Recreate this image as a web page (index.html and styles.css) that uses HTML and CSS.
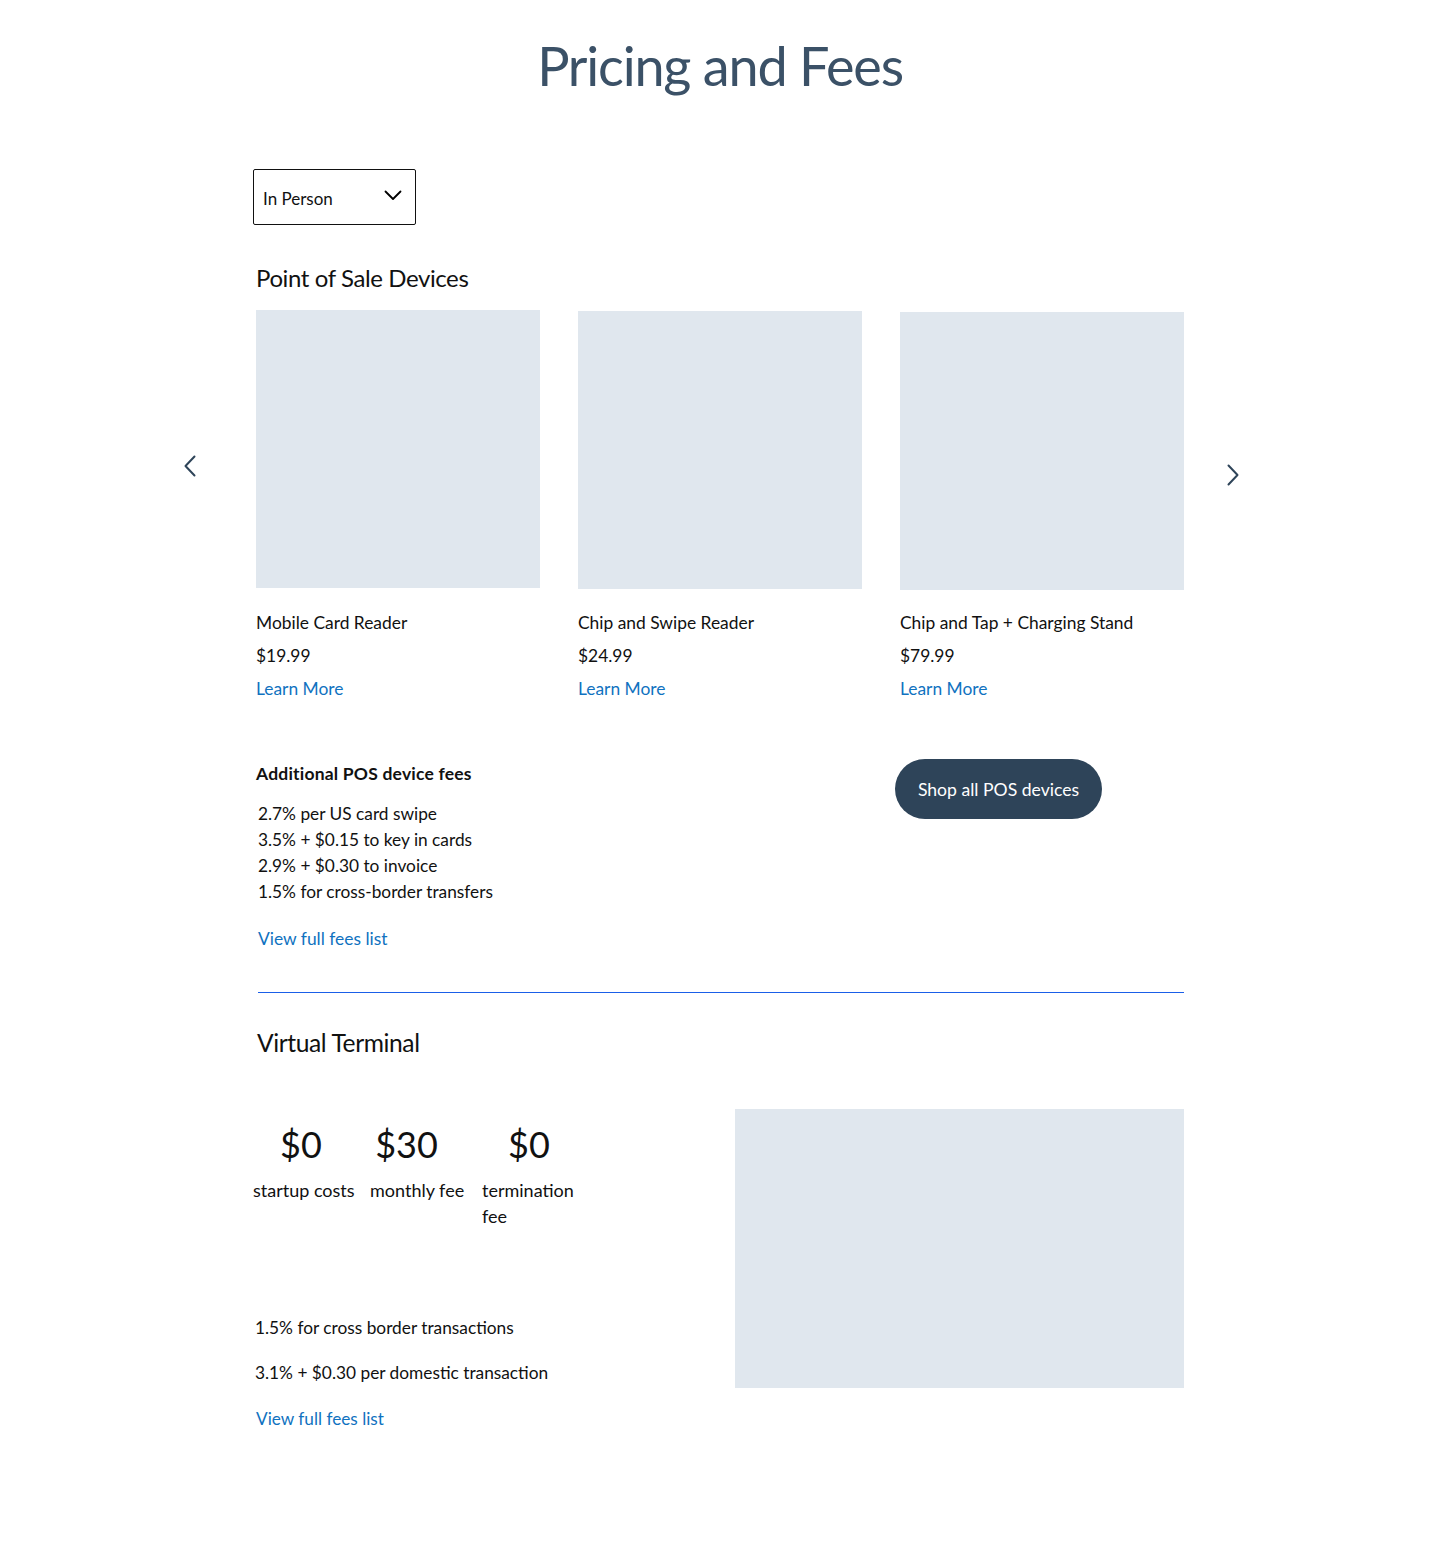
FILE: index.html
```html
<!DOCTYPE html>
<html lang="en">
<head>
<meta charset="utf-8">
<title>Pricing and Fees</title>
<link rel="stylesheet" href="styles.css">
</head>
<body>
<h1 class="page-title">Pricing and Fees</h1>
<main class="wrap">
  <div class="select">
    <span>In Person</span>
    <svg class="select-chev" width="18" height="11" viewBox="0 0 18 11"><path d="M1.5 1.5 L9 9 L16.5 1.5" fill="none" stroke="#000" stroke-width="1.8" stroke-linecap="round" stroke-linejoin="round"/></svg>
  </div>

  <h2 class="section-title">Point of Sale Devices</h2>

  <div class="carousel">
    <button class="arrow arrow-prev" aria-label="Previous">
      <svg width="12" height="22" viewBox="0 0 12 22"><path d="M10.5 1.5 L1.5 11 L10.5 20.5" fill="none" stroke="#2e4459" stroke-width="2" stroke-linecap="round" stroke-linejoin="round"/></svg>
    </button>
    <div class="cards">
      <div class="card">
        <div class="thumb"></div>
        <p class="card-name">Mobile Card Reader</p>
        <p class="card-price">$19.99</p>
        <a class="link" href="#">Learn More</a>
      </div>
      <div class="card card-2">
        <div class="thumb"></div>
        <p class="card-name">Chip and Swipe Reader</p>
        <p class="card-price">$24.99</p>
        <a class="link" href="#">Learn More</a>
      </div>
      <div class="card card-3">
        <div class="thumb"></div>
        <p class="card-name">Chip and Tap + Charging Stand</p>
        <p class="card-price">$79.99</p>
        <a class="link" href="#">Learn More</a>
      </div>
    </div>
    <button class="arrow arrow-next" aria-label="Next">
      <svg width="12" height="22" viewBox="0 0 12 22"><path d="M1.5 1.5 L10.5 11 L1.5 20.5" fill="none" stroke="#2e4459" stroke-width="2" stroke-linecap="round" stroke-linejoin="round"/></svg>
    </button>
  </div>

  <div class="fees-row">
    <div class="fees">
      <h3 class="fees-title">Additional POS device fees</h3>
      <ul class="fees-list">
        <li>2.7% per US card swipe</li>
        <li>3.5% + $0.15 to key in cards</li>
        <li>2.9% + $0.30 to invoice</li>
        <li>1.5% for cross-border transfers</li>
      </ul>
      <a class="link link-fees" href="#">View full fees list</a>
    </div>
    <a class="btn" href="#">Shop all POS devices</a>
  </div>

  <hr class="divider">

  <h2 class="section-title vt-title">Virtual Terminal</h2>

  <div class="vt-row">
    <div class="vt-left">
      <div class="stats">
        <div class="stat stat-1">
          <div class="stat-value">$0</div>
          <div class="stat-label">startup costs</div>
        </div>
        <div class="stat stat-2">
          <div class="stat-value">$30</div>
          <div class="stat-label">monthly fee</div>
        </div>
        <div class="stat stat-3">
          <div class="stat-value">$0</div>
          <div class="stat-label">termination fee</div>
        </div>
      </div>
      <p class="vt-text vt-first">1.5% for cross border transactions</p>
      <p class="vt-text">3.1% + $0.30 per domestic transaction</p>
      <a class="link vt-link" href="#">View full fees list</a>
    </div>
    <div class="vt-image"></div>
  </div>
</main>
</body>
</html>
```

FILE: styles.css
```css
* { box-sizing: border-box; }

body {
  margin: 0;
  background: #fff;
  color: #111;
  font-family: Lato, "Open Sans", "Liberation Sans", sans-serif;
}

.page-title {
  margin: 0;
  padding-top: 33px;
  text-align: center;
  font-size: 54px;
  line-height: 66px;
  font-weight: 400;
  color: #3b5167;
  letter-spacing: -1.2px;
}

.wrap {
  width: 928px;
  margin: 0 auto;
  padding-bottom: 110px;
}

.select {
  margin-top: 70px;
  margin-left: -3px;
  width: 163px;
  height: 56px;
  border: 1px solid #111;
  border-radius: 2px;
  display: flex;
  align-items: center;
  justify-content: space-between;
  padding: 2px 13px 0 9px;
  font-size: 17px;
}
.select-chev { margin-top: -6px; }

.section-title {
  margin: 37px 0 0;
  font-size: 24px;
  line-height: 32px;
  font-weight: 400;
  color: #111;
  letter-spacing: -0.4px;
}

.carousel {
  display: flex;
  margin: 16px -72px 0;
}
.arrow {
  width: 72px;
  flex: none;
  background: none;
  border: 0;
  padding: 0;
  display: flex;
  align-items: flex-start;
  cursor: pointer;
}
.arrow-prev { justify-content: flex-start; padding-top: 145px; }
.arrow-next { justify-content: flex-end; padding-right: 17px; padding-top: 154px; }

.cards {
  display: grid;
  grid-template-columns: repeat(3, 284px);
  column-gap: 38px;
  width: 928px;
}
.thumb {
  height: 278px;
  background: #e0e7ee;
}
.card-2 .thumb { margin-top: 1px; margin-bottom: -1px; }
.card-3 .thumb { margin-top: 2px; margin-bottom: -2px; }
.card p { margin: 0; }
.card-name {
  margin-top: 18px !important;
  font-size: 17.4px;
  line-height: 33px;
}
.card-price {
  font-size: 17.4px;
  line-height: 33px;
}
.card .link {
  display: block;
  font-size: 17.4px;
  line-height: 33px;
}

.link {
  color: #1072c0;
  text-decoration: none;
}

.fees-row {
  display: grid;
  grid-template-columns: 606px 1fr;
  column-gap: 38px;
  margin-top: 54px;
  align-items: start;
}
.fees-title {
  margin: 3px 0 0;
  font-size: 17.5px;
  line-height: 24px;
  font-weight: 700;
  letter-spacing: 0.2px;
}
.fees-list {
  list-style: none;
  margin: 15px 0 0;
  padding: 0 0 0 2px;
  font-size: 17.3px;
  line-height: 26px;
}
.link-fees {
  display: inline-block;
  margin: 21px 0 0 2px;
  font-size: 17.4px;
  line-height: 26px;
}

.btn {
  justify-self: start;
  margin-left: -5px;
  display: flex;
  align-items: center;
  justify-content: center;
  width: 207px;
  height: 60px;
  border-radius: 30px;
  background: #2e4459;
  color: #fff;
  font-size: 17.6px;
  text-decoration: none;
}

.divider {
  margin: 40px 0 0 2px;
  border: 0;
  height: 1px;
  background: #1a5fe8;
}

.vt-title {
  margin-top: 34px;
  margin-left: 1px;
  font-size: 24.6px;
}

.vt-row {
  display: flex;
  justify-content: space-between;
  align-items: flex-start;
  margin-top: 50px;
}
.vt-left {
  margin-left: -3px;
  padding-top: 13px;
}
.stats {
  display: flex;
  gap: 15px;
}
.stat { width: 102px; }
.stat-2 { width: 97px; }
.stat-3 { width: 100px; }
.stat-value {
  font-size: 36px;
  line-height: 44px;
  text-align: center;
  color: #111;
}
.stat-1 .stat-value { padding-right: 6px; }
.stat-2 .stat-value { padding-right: 24px; }
.stat-3 .stat-value { padding-right: 6px; }
.stat-label {
  margin-top: 11px;
  font-size: 18px;
  line-height: 26px;
}

.vt-text {
  margin: 0 0 0 2px;
  font-size: 17.3px;
  line-height: 26px;
}
.vt-first { margin-top: 86px; }
.vt-text + .vt-text { margin-top: 19px; }
.vt-link {
  display: inline-block;
  margin: 20px 0 0 3px;
  font-size: 17.2px;
  line-height: 26px;
}

.vt-image {
  width: 449px;
  height: 279px;
  background: #e0e7ee;
}
```
